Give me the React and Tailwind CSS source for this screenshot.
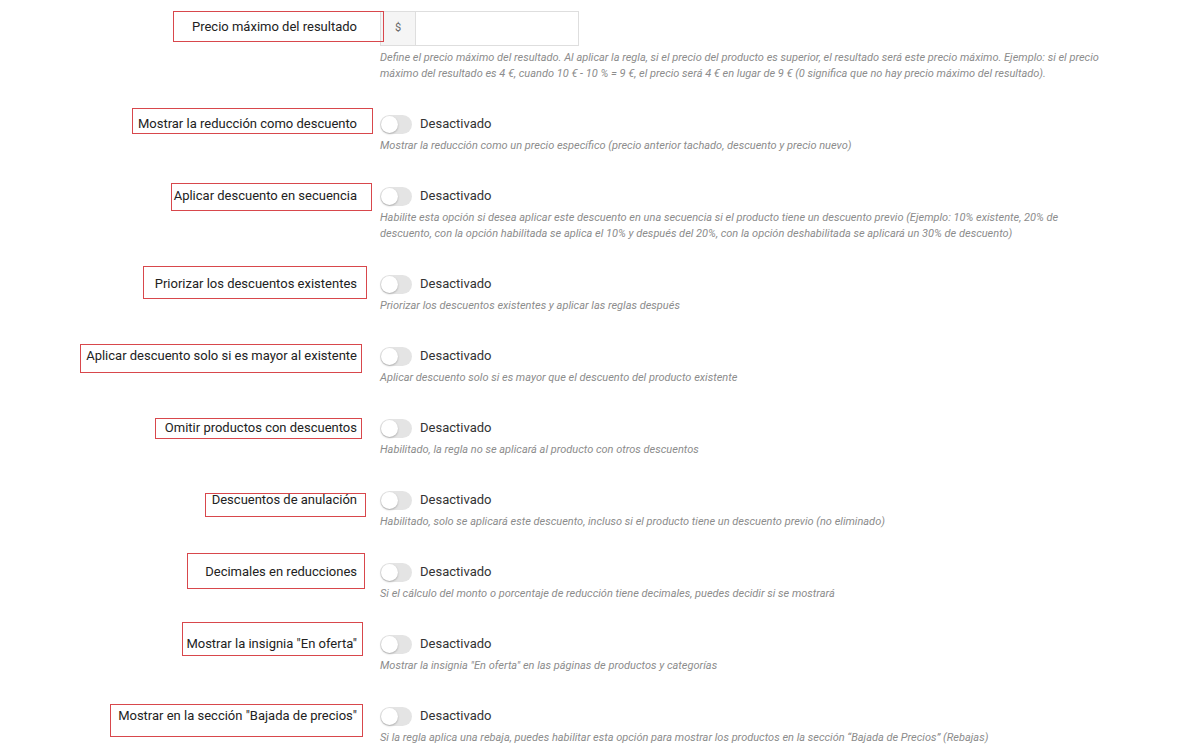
import React from 'react';

// red annotation box offsets relative to the label text (px): l, r, t, b
const rows = [
  {
    label: 'Mostrar la reducción como descuento',
    box: 'left-[-6px] right-[-16px] top-[-6px] bottom-[0px]',
    desc: 'Mostrar la reducción como un precio específico (precio anterior tachado, descuento y precio nuevo)',
  },
  {
    label: 'Aplicar descuento en secuencia',
    box: 'left-[-3px] right-[-15px] top-[-3px] bottom-[-5px]',
    desc: 'Habilite esta opción si desea aplicar este descuento en una secuencia si el producto tiene un descuento previo (Ejemplo: 10% existente, 20% de descuento, con la opción habilitada se aplica el 10% y después del 20%, con la opción deshabilitada se aplicará un 30% de descuento)',
  },
  {
    label: 'Priorizar los descuentos existentes',
    box: 'left-[-12px] right-[-10px] top-[-8px] bottom-[-5px]',
    desc: 'Priorizar los descuentos existentes y aplicar las reglas después',
  },
  {
    label: 'Aplicar descuento solo si es mayor al existente',
    box: 'left-[-6px] right-[-5px] top-[-2px] bottom-[-7px]',
    desc: 'Aplicar descuento solo si es mayor que el descuento del producto existente',
  },
  {
    label: 'Omitir productos con descuentos',
    box: 'left-[-10px] right-[-5px] top-[0px] bottom-[-1px]',
    desc: 'Habilitado, la regla no se aplicará al producto con otros descuentos',
  },
  {
    label: 'Descuentos de anulación',
    box: 'left-[-7px] right-[-9px] top-[3px] bottom-[-7px]',
    desc: 'Habilitado, solo se aplicará este descuento, incluso si el producto tiene un descuento previo (no eliminado)',
  },
  {
    label: 'Decimales en reducciones',
    box: 'left-[-18px] right-[-8px] top-[-9px] bottom-[-7px]',
    desc: 'Si el cálculo del monto o porcentaje de reducción tiene decimales, puedes decidir si se mostrará',
  },
  {
    label: 'Mostrar la insignia "En oferta"',
    box: 'left-[-4px] right-[-6px] top-[-12px] bottom-[-2px]',
    desc: 'Mostrar la insignia "En oferta" en las páginas de productos y categorías',
  },
  {
    label: 'Mostrar en la sección "Bajada de precios"',
    box: 'left-[-8px] right-[-6px] top-[-2px] bottom-[-11px]',
    desc: 'Si la regla aplica una rebaja, puedes habilitar esta opción para mostrar los productos en la sección “Bajada de Precios” (Rebajas)',
  },
];

const Label = ({ text, box }) => (
  <span className="relative inline-block text-[13px] leading-5 font-normal text-[#222]">
    {text}
    <span className={`absolute border border-[#d8474c] pointer-events-none ${box}`}></span>
  </span>
);

const Desc = ({ children, className = 'mt-1' }) => (
  <p className={`${className} max-w-[732px] text-[11px] leading-4 italic text-[#8c8c8c]`}>{children}</p>
);

const Toggle = () => (
  <div className="flex items-center gap-[8px] h-5">
    <div className="relative w-8 h-[19px] rounded-full bg-[#e4e4e4]">
      <div className="absolute left-px top-px w-[17px] h-[17px] rounded-full bg-white shadow-[0_1px_2px_rgba(0,0,0,0.25)]"></div>
    </div>
    <span className="text-[13px] text-[#333]">Desactivado</span>
  </div>
);

const App = () => {
  return (
    <div className="min-h-[755px] bg-white pt-[11px]" style={{ fontFamily: 'Roboto, "Noto Sans", sans-serif' }}>
      <div className="flex flex-col gap-8">
        {/* Precio máximo */}
        <div className="grid grid-cols-[357px_1fr] gap-x-[23px]">
          <div className="flex items-center justify-end h-[35px] pb-[3px]">
            <Label text="Precio máximo del resultado" box="left-[-19px] right-[-27px] top-[-6px] bottom-[-5px]" />
          </div>
          <div>
            <div className="flex w-[199px] h-[35px] border border-[#dedede]">
              <div className="w-[35px] flex items-center justify-center bg-[#f5f5f5] border-r border-[#dedede] text-[11px] text-[#666]">$</div>
              <input className="flex-1 min-w-0 outline-none px-2 text-[13px]" />
            </div>
            <Desc className="mt-[4px]">
              Define el precio máximo del resultado. Al aplicar la regla, si el precio del producto es superior, el resultado será este precio máximo. Ejemplo: si el precio máximo del resultado es 4 €, cuando 10 € - 10 % = 9 €, el precio será 4 € en lugar de 9 € (0 significa que no hay precio máximo del resultado).
            </Desc>
          </div>
        </div>

        {rows.map((row, idx) => (
          <div key={idx} className="grid grid-cols-[357px_1fr] gap-x-[23px]">
            <div className="flex items-start justify-end">
              <Label text={row.label} box={row.box} />
            </div>
            <div>
              <Toggle />
              <Desc>{row.desc}</Desc>
            </div>
          </div>
        ))}
      </div>
    </div>
  );
};

export default App;
